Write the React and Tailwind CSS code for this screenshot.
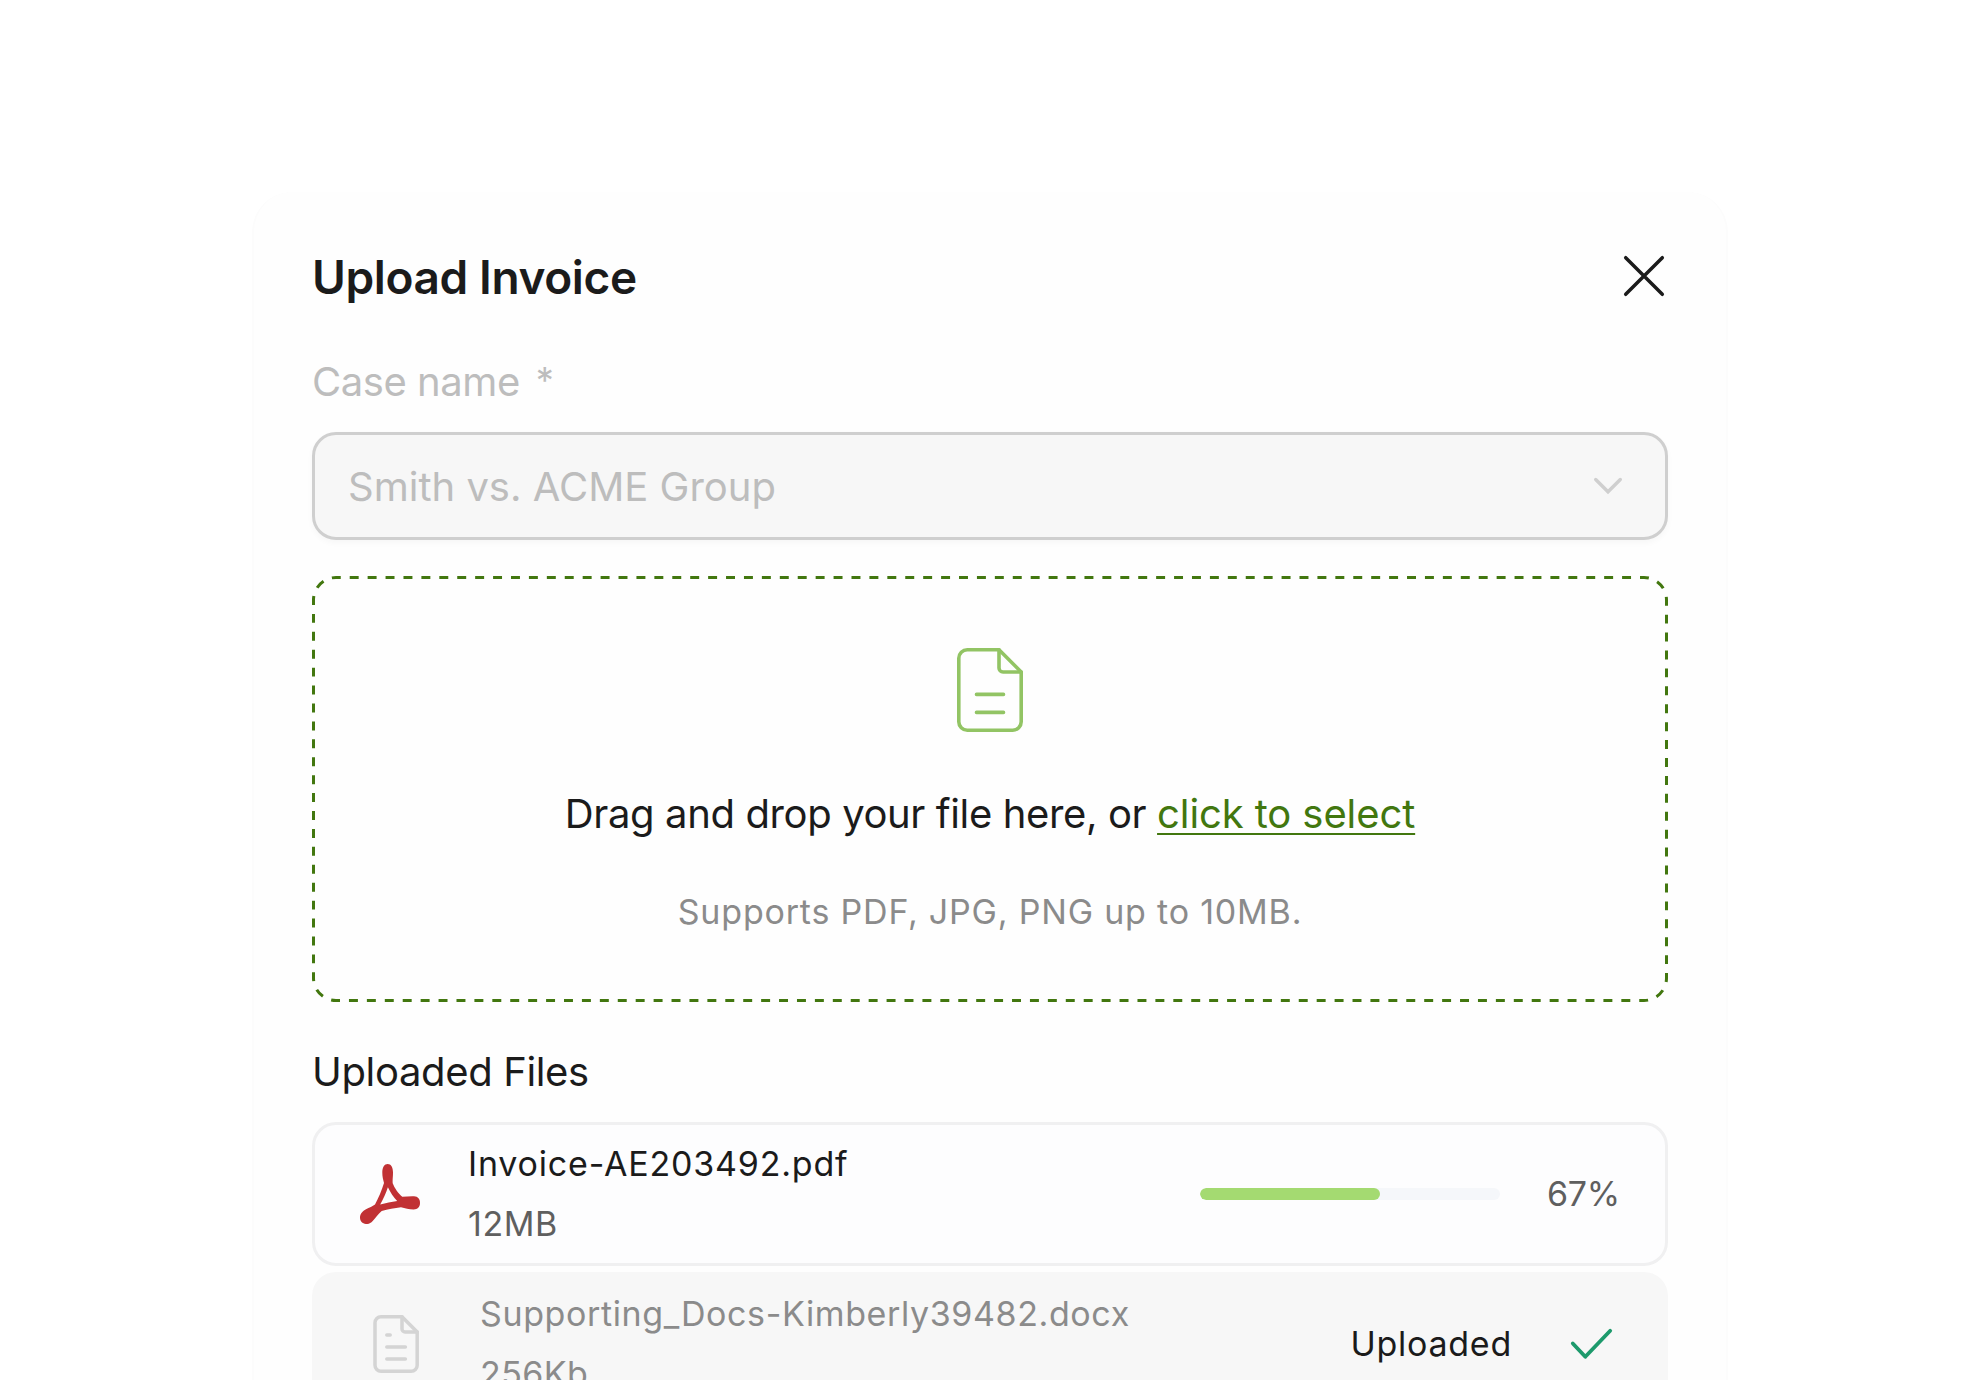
import { useState } from 'react';

const DocumentIcon = () => (
  <svg
    className="h-[84px] w-[66px] text-[#92c464]"
    viewBox="0 0 66 84"
    fill="none"
    stroke="currentColor"
    strokeWidth="3.6"
    strokeLinecap="round"
    strokeLinejoin="round"
  >
    <path d="M42 1.8H10.300a8.500 8.500 0 0 0-8.500 8.500v63.400a8.500 8.500 0 0 0 8.500 8.500h45.400a8.500 8.500 0 0 0 8.500-8.500V24L42 1.800Z" />
    <path d="M42 1.8V20a4 4 0 0 0 4 4h18.200" />
    <path d="M19.5 46.4h27M19.5 64.4h27" />
  </svg>
);

const SmallDocumentIcon = () => (
  <svg
    className="h-[58px] w-[46px] text-[#d4d4d4]"
    viewBox="0 0 46 58"
    fill="none"
    stroke="currentColor"
    strokeWidth="3.5"
    strokeLinecap="round"
    strokeLinejoin="round"
  >
    <path d="M29 1.8H8a6 6 0 0 0-6 6v42.400a6 6 0 0 0 6 6h30.200a6 6 0 0 0 6-6V17L29 1.800Z" />
    <path d="M29 1.8V14a3 3 0 0 0 3 3h12.200" />
    <path d="M13.8 20h3.400M13.8 32h18.600M13.8 44h18.600" />
  </svg>
);

const PdfIcon = () => (
  <svg className="h-[60px] w-[60px] text-[#c13134]" viewBox="0 0 60 60" fill="currentColor">
    <path
      fillRule="evenodd"
      d="M27.7 0C31 0 33 3.4 33 8.500c0 4.400-.6 7.500-.3 10.800C34.500 24 38.500 30 42.300 32.800c3.700-.3 7.700-.6 11.700-.5 4 .2 6 3 6 6.700 0 4-2.600 6.500-6.500 6.400-4.500-.1-8.500-1-12.500-2.100-6.500.8-13 1.900-19.300 3.600-3.200 2.700-6 6.500-9 10.100C10.800 59.200 8.700 60.200 6 60c-3.700-.3-6-3-6-6.500 0-3.700 2.600-6.300 6-8.300 3.300-1.700 6.500-2.700 9-4.600C18.300 34 21.800 26.500 24 19c-.8-3.400-1.700-6-1.700-10.500C22.300 3.400 24.400 0 27.700 0Zm.2 23.200c-2 6-4.500 11.800-7.700 17.300 5.600-1.500 11.200-2.600 17-3.500C33.500 33 30.400 28.500 27.900 23.200Z"
    />
  </svg>
);

const files = [
  { name: 'Invoice-AE203492.pdf', size: '12MB', progress: 67, fill: 60 },
  { name: 'Supporting_Docs-Kimberly39482.docx', size: '256Kb' },
];

const ProgressRow = ({ file }) => (
  <div className="flex h-36 items-center rounded-[24px] border-[3px] border-[#f0f0f1] bg-[#fdfdfe] px-[45px] text-[34px] leading-[60px]">
    <PdfIcon />
    <div className="ml-12 flex-1">
      <p className="tracking-[0.8px] text-[#1b1b1b]">{file.name}</p>
      <p className="tracking-[0.55px] text-[#5f5f5f]">{file.size}</p>
    </div>
    <div className="h-3 w-[300px] overflow-hidden rounded-md bg-[#f5f7fa]">
      <div className="h-full rounded-md bg-[#a4da71]" style={{ width: `${file.fill}%` }} />
    </div>
    <span className="ml-[47px] w-[73px] tracking-[-0.3px] text-[#5f5f5f]">{file.progress}%</span>
  </div>
);

const UploadedRow = ({ file }) => (
  <div className="flex h-36 items-center rounded-[24px] bg-[#f7f7f7] px-12 text-[34px] leading-[60px]">
    <div className="flex w-[72px] justify-center">
      <SmallDocumentIcon />
    </div>
    <div className="ml-12 flex-1 text-[#8b8b8b]">
      <p className="tracking-[0.61px]">{file.name}</p>
      <p className="tracking-[0.4px]">{file.size}</p>
    </div>
    <span className="tracking-[0.75px] text-[#1b1b1b]">Uploaded</span>
    <svg
      className="ml-[49px] h-[60px] w-[59px] text-[#1d9a6c]"
      viewBox="0 0 59 60"
      fill="none"
      stroke="currentColor"
      strokeWidth="3.8"
      strokeLinecap="round"
      strokeLinejoin="round"
    >
      <path d="M11.8 29.500 24.300 42.800 49.200 16.800" />
    </svg>
  </div>
);

export default function App() {
  const [open, setOpen] = useState(true);

  if (!open) return null;

  return (
    <div className="flex h-[1380px] w-full justify-center overflow-hidden bg-white pt-48 font-['Inter','Liberation_Sans',sans-serif]">
      <div className="h-[1300px] w-[1476px] rounded-[40px] border-2 border-t-0 border-[#fcfcfc] bg-[#fefefe] px-[58px] pt-[60px]">
        {/* Header */}
        <div className="flex h-12 items-center justify-between">
          <h2 className="pt-[2px] text-[46px] leading-[48px] font-semibold tracking-[-0.38px] text-[#1b1b1b]">
            Upload Invoice
          </h2>
          <button onClick={() => setOpen(false)} className="text-[#1b1b1b]">
            <svg
              className="h-12 w-12"
              viewBox="0 0 48 48"
              fill="none"
              stroke="currentColor"
              strokeWidth="3.5"
              strokeLinecap="round"
            >
              <path d="m5.700 5.700 36.600 36.600M42.300 5.700 5.700 42.300" />
            </svg>
          </button>
        </div>

        {/* Case select */}
        <label className="mt-[52px] flex text-[40px] leading-[60px] text-[#bdbdbd]">
          <span className="tracking-[-0.45px]">Case name</span>
          <span className="ml-4 text-[36px] leading-[57px]">*</span>
        </label>
        <div className="mt-5 flex h-[108px] items-center justify-between rounded-[24px] border-[3px] border-[#cfcfcf] bg-[#f7f7f7] pr-[39px] pl-[33px] shadow-[0_3px_6px_rgba(0,0,0,0.03)]">
          <span className="pt-[2px] text-[40px] leading-[60px] text-[#bdbdbd]">Smith vs. ACME Group</span>
          <svg
            className="h-9 w-9 text-[#cfcfcf]"
            viewBox="0 0 36 36"
            fill="none"
            stroke="currentColor"
            strokeWidth="3.4"
            strokeLinecap="round"
          >
            <path d="M5.700 11.500 18 23.800 30.300 11.500" />
          </svg>
        </div>

        {/* Drop zone */}
        <div className="relative mt-9 flex h-[426px] flex-col items-center pt-[72px]">
          <svg className="absolute inset-0 h-full w-full text-[#42770f]" viewBox="0 0 1356 426" fill="none">
            <rect
              x="1.5"
              y="1.5"
              width="1353"
              height="423"
              rx="22.5"
              stroke="currentColor"
              strokeWidth="3"
              pathLength="392"
              strokeDasharray="1 1"
              strokeDashoffset="0.47"
            />
          </svg>
          <DocumentIcon />
          <p className="mt-[52px] text-[40px] leading-[60px] tracking-[-0.38px] text-[#1b1b1b]">
            Drag and drop your file here, or{' '}
            <a className="tracking-[-0.1px] text-[#42770f] underline decoration-2 underline-offset-[5px] [text-decoration-skip-ink:none]">
              click to select
            </a>
          </p>
          <p className="mt-[41px] text-[34px] leading-[54px] tracking-[0.8px] text-[#8b8b8b]">
            Supports PDF, JPG, PNG up to 10MB.
          </p>
        </div>

        {/* Files */}
        <h3 className="mt-10 text-[40px] leading-[60px] tracking-[-0.35px] text-[#1b1b1b]">
          Uploaded Files
        </h3>
        <div className="mt-5 flex flex-col gap-1.5">
          <ProgressRow file={files[0]} />
          <UploadedRow file={files[1]} />
        </div>
      </div>
    </div>
  );
}
